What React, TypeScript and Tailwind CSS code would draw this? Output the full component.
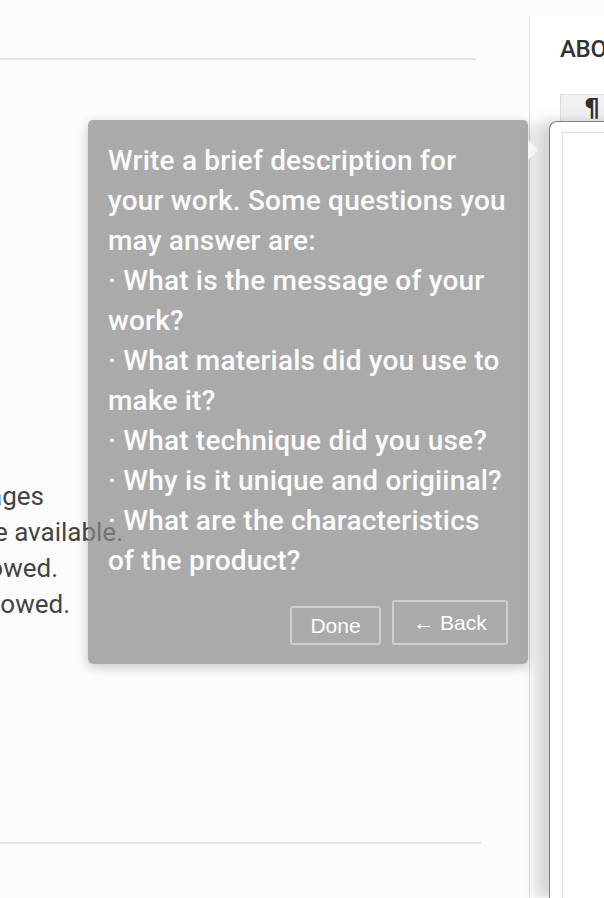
const hintLines = [
  "Write a brief description for",
  "your work. Some questions you",
  "may answer are:",
  "· What is the message of your",
  "work?",
  "· What materials did you use to",
  "make it?",
  "· What technique did you use?",
  "· Why is it unique and origiinal?",
  "· What are the characteristics",
  "of the product?",
];

// upload rules, scrolled so only the tail of each line shows
const rules = [
  { text: "You can upload up to 10 images", width: "w-[44px]" },
  { text: "Only JPG and PNG formats are available.", width: "w-[123px]" },
  { text: "GIF files are not allowed.", width: "w-[58px]" },
  { text: "Videos are not allowed.", width: "w-[70px]" },
];

function Tooltip() {
  return (
    <div className="absolute left-[88px] top-[120px] flex w-[440px] flex-col rounded-[5px] bg-[#878787]/70 px-5 pb-[19px] pt-[21px] shadow-[0_3px_12px_rgba(0,0,0,0.22)]">
      <span className="absolute -right-[10px] top-[20px] h-0 w-0 border-y-[10px] border-l-[10px] border-y-transparent border-l-[#f6f6f6]" />
      <div className="text-[28px] font-medium leading-[40px] tracking-[0.2px] text-[#fbfbfb]">
        {hintLines.map((line, i) => (
          <div key={i} className="whitespace-nowrap">
            {line}
          </div>
        ))}
      </div>
      <div className="mt-[19px] flex items-end justify-end gap-[11px] font-['Liberation_Sans',Arial,sans-serif] text-[21px] text-white">
        <button className="flex h-[39px] w-[91px] items-center justify-center rounded-[3px] border-2 border-[#cdcdcd]">
          Done
        </button>
        <button className="flex h-[45px] w-[116px] items-center justify-center rounded-[3px] border-2 border-[#cdcdcd]">
          ← Back
        </button>
      </div>
    </div>
  );
}

export default function App() {
  return (
    <div className="relative flex h-[898px] w-[604px] overflow-hidden bg-[#fcfcfc] font-['Roboto',sans-serif]">
      {/* Main column */}
      <main className="flex w-[529px] shrink-0 flex-col">
        <div className="h-[58px]" />
        <div className="h-[2px] w-[476px] bg-[#e4e4e4]" />
        <div className="flex-1">
          <div className="mt-[418px] flex flex-col text-[26px] leading-[36px] text-[#444444]">
            {rules.map((r, i) => (
              <div key={i} className={`flex justify-end whitespace-nowrap ${r.width}`}>
                {r.text}
              </div>
            ))}
          </div>
        </div>
        <div className="h-[2px] w-[481px] bg-[#e4e4e4]" />
        <div className="h-[54px]" />
      </main>

      {/* Sidebar */}
      <aside className="mt-4 flex flex-1 flex-col border-l border-[#e3e3e3] bg-white pl-[30px] pt-[19px]">
        <h2 className="whitespace-nowrap text-[24px] font-medium leading-[28px] tracking-[-0.3px] text-[#333333]">
          ABOUT YOUR WORK
        </h2>
        <div className="mt-[31px] flex h-[27px] w-[60px] items-end border-l border-t border-[#dcdcdc] bg-[#f1f1f1] pl-[23px] font-['DejaVu_Sans',sans-serif] text-[25px] font-bold leading-[27px] text-[#2e2e2e]">
          ¶
        </div>
        <div className="-ml-[11px] flex flex-1 flex-col rounded-tl-[8px] border-l border-t border-[#808080] bg-white pl-[12px] pt-[10px] shadow-[-14px_0_14px_rgba(0,0,0,0.16)]">
          <div className="flex-1 border-l border-t border-[#dddddd] bg-white" />
        </div>
      </aside>

      <Tooltip />
    </div>
  );
}
